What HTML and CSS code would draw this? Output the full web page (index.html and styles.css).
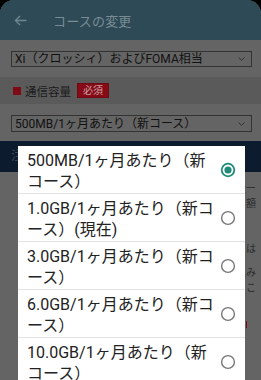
FILE: index.html
```html
<!DOCTYPE html>
<html lang="ja">
<head>
<meta charset="utf-8">
<title>コースの変更</title>
<link rel="stylesheet" href="styles.css">
</head>
<body>
<div class="app">
  <header class="appbar">
    <svg class="back" width="13" height="11" viewBox="0 0 13 11"><path d="M12.5 5.5H1.5M6 1L1.5 5.5L6 10" fill="none" stroke="currentColor" stroke-width="1.4"/></svg>
    <h1 class="title">コースの変更</h1>
  </header>
  <main class="page">
    <div class="select"><span>Xi（クロッシィ）およびFOMA相当</span><svg class="chev" width="7" height="4" viewBox="0 0 7 4"><path d="M0.5 0.5L3.5 3.3L6.5 0.5" fill="none" stroke="currentColor" stroke-width="1"/></svg></div>
    <div class="band"><span class="mark"></span><span class="label">通信容量</span><span class="req">必須</span></div>
    <div class="select"><span>500MB/1ヶ月あたり（新コース）</span><svg class="chev" width="7" height="4" viewBox="0 0 7 4"><path d="M0.5 0.5L3.5 3.3L6.5 0.5" fill="none" stroke="currentColor" stroke-width="1"/></svg></div>
    <div class="notice">注意事項</div>
    <div class="notes">
      <p>ご利用料金ー</p>
      <p>月額</p>
      <p>&nbsp;</p>
      <p>&nbsp;</p>
      <p>には</p>
      <p class="gap">込み</p>
      <p>こ</p>
      <p class="redline"><span></span></p>
    </div>
  </main>
  <div class="dialog">
    <div class="opt"><span class="txt">500MB/1ヶ月あたり（新コース）</span><svg class="radio" width="16" height="16" viewBox="0 0 16 16"><circle cx="8" cy="8" r="6.3" fill="none" stroke="#1e8c79" stroke-width="1.8"/><circle cx="8" cy="8" r="3.6" fill="#1e8c79"/></svg></div>
    <div class="opt"><span class="txt">1.0GB/1ヶ月あたり（新コース）(現在)</span><svg class="radio" width="16" height="16" viewBox="0 0 16 16"><circle cx="8" cy="8" r="6.4" fill="none" stroke="#767676" stroke-width="1.4"/></svg></div>
    <div class="opt"><span class="txt">3.0GB/1ヶ月あたり（新コース）</span><svg class="radio" width="16" height="16" viewBox="0 0 16 16"><circle cx="8" cy="8" r="6.4" fill="none" stroke="#767676" stroke-width="1.4"/></svg></div>
    <div class="opt"><span class="txt">6.0GB/1ヶ月あたり（新コース）</span><svg class="radio" width="16" height="16" viewBox="0 0 16 16"><circle cx="8" cy="8" r="6.4" fill="none" stroke="#767676" stroke-width="1.4"/></svg></div>
    <div class="opt"><span class="txt">10.0GB/1ヶ月あたり（新コース）</span><svg class="radio" width="16" height="16" viewBox="0 0 16 16"><circle cx="8" cy="8" r="6.4" fill="none" stroke="#767676" stroke-width="1.4"/></svg></div>
  </div>
</div>
</body>
</html>
```
FILE: styles.css
```css
* { box-sizing: border-box; }
html, body { margin: 0; padding: 0; background: #000; }
body { font-family: Roboto, "Noto Sans CJK JP", sans-serif; }
.app {
  position: relative;
  width: 261px;
  height: 380px;
  overflow: hidden;
  border-radius: 14px 14px 0 0;
  background: #646464;
}
.appbar {
  height: 40px;
  background: #2d4a56;
  display: flex;
  align-items: center;
  padding-left: 14px;
  color: #71868f;
}
.back { display: block; margin-right: 26px; }
.title {
  margin: 0;
  font-size: 13px;
  font-weight: normal;
  color: #7a8c94;
  letter-spacing: 0.2px;
}
.page { display: flex; flex-direction: column; }
.select {
  margin: 11px 9px 0 11px;
  height: 16px;
  border: 1px solid #333;
  display: flex;
  align-items: center;
  justify-content: space-between;
  padding: 0 6px 0 3px;
  font-size: 12px;
  line-height: 14px;
  color: #111;
  white-space: nowrap;
}
.chev { color: #333; display: block; }
.band {
  margin-top: 10px;
  height: 27px;
  background: #5a5a5a;
  display: flex;
  align-items: center;
  padding-left: 13px;
  font-size: 11.5px;
  color: #1a1a1a;
}
.mark { width: 8px; height: 8px; background: #7d0a14; margin-right: 4px; }
.label { margin-right: 6px; }
.req {
  background: #860b16;
  color: #c9a0a3;
  font-size: 10px;
  line-height: 13px;
  padding: 0 5px;
  border: 1px solid #6e0a12;
}
.band + .select { height: 17px; }
.notice {
  margin-top: 9px;
  height: 31px;
  background: #0d1b2e;
  color: #3d4c5e;
  font-size: 12px;
  line-height: 31px;
  padding-left: 11px;
}
.notes {
  padding: 9px 5px 0 0;
  font-size: 10px;
  line-height: 15px;
  color: #2a2a2a;
  text-align: right;
}
.notes p { margin: 0; white-space: nowrap; }
.notes .gap { margin-top: 9px; }
.notes .redline { margin-top: 22px; height: 15px; }
.notes .redline span { display: inline-block; width: 1px; height: 7px; background: #7d0a14; margin-right: 9px; }
.dialog {
  position: absolute;
  left: 18px;
  top: 146px;
  width: 227px;
  background: #fff;
}
.opt {
  height: 48px;
  border-bottom: 1px solid #e2e2e2;
  display: flex;
  align-items: center;
  padding: 3px 9px 0 9px;
  font-size: 16px;
  line-height: 21px;
  color: #222;
}
.txt { width: 190px; flex: none; }
.radio { display: block; margin-left: 3px; margin-top: -3px; }
```
